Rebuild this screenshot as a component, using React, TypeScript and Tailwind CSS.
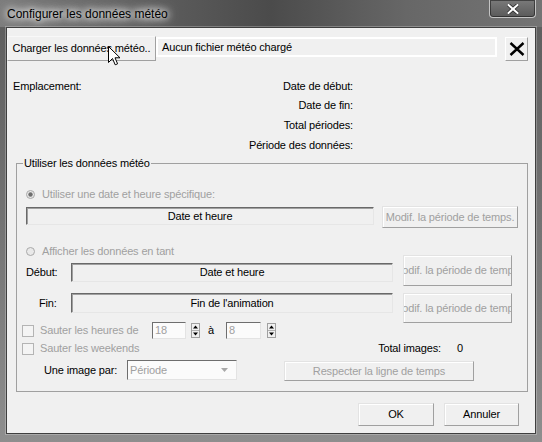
import React from "react";

const btnBase =
  "flex items-center justify-center overflow-hidden whitespace-nowrap bg-[#f0f0f0] border border-t-[#e3e3e3] border-l-[#e3e3e3] border-r-[#a0a0a0] border-b-[#a0a0a0] shadow-[inset_1px_1px_0_#ffffff]";
const sunken =
  "flex items-center justify-center whitespace-nowrap overflow-hidden bg-[#f0f0f0] border border-t-[#696969] border-l-[#696969] border-r-[#e6e6e6] border-b-[#e6e6e6] shadow-[inset_1px_1px_0_#a0a0a0]";
const sunkenWhite =
  "flex items-center whitespace-nowrap overflow-hidden bg-[#fbfbfb] border border-t-[#6e6e6e] border-l-[#6e6e6e] border-r-[#e3e3e3] border-b-[#e3e3e3]";

function Radio({ checked }: { checked?: boolean }) {
  return (
    <svg width="9" height="9" viewBox="0 0 9 9" className="shrink-0">
      <circle cx="4.5" cy="4.5" r="4" fill="#e9e9e9" stroke="#a8a8a8" strokeWidth="1" />
      {checked && <circle cx="4.5" cy="4.5" r="2.2" fill="#6e6e6e" />}
    </svg>
  );
}

function Check() {
  return <div className="w-[12px] h-[12px] shrink-0 border border-[#b4b4b4] bg-[#f4f4f4]" />;
}

function Spinner() {
  return (
    <svg width="9" height="15" viewBox="0 0 9 15" className="shrink-0">
      <rect x="0.5" y="0.5" width="8" height="14" fill="#f0f0f0" stroke="#a0a0a0" />
      <line x1="1" y1="7.5" x2="8" y2="7.5" stroke="#b0b0b0" />
      <path d="M4.5 2.5 L7 5.5 L2 5.5 Z" fill="#000" />
      <path d="M2 9.5 L7 9.5 L4.5 12.5 Z" fill="#000" />
    </svg>
  );
}

export default function App() {
  return (
    <div className="relative w-[542px] h-[442px] overflow-hidden flex flex-col font-['Liberation_Sans',Arial,sans-serif] text-[11px] tracking-[-0.15px] text-black bg-[linear-gradient(180deg,#5c5c5c_0%,#737373_50%,#8e8e8e_100%)]">
      {/* Title bar */}
      <div className="h-[27px] shrink-0 flex items-start bg-[linear-gradient(90deg,#7c7c7c_0%,#5c5c5c_30%,#4b4b4b_50%,#676767_75%,#747474_100%)]">
        <span className="ml-[7px] mt-[6px] text-[12px] tracking-normal leading-[16px] text-black [text-shadow:0_0_6px_#ffffff,0_0_10px_#ffffff,0_0_14px_#ffffff]">
          Configurer les données météo
        </span>
        <div className="ml-auto mr-[6px] w-[47px] h-[18px] flex items-center justify-center rounded-b-[4px] border border-t-0 border-[#c4c4c4] bg-[linear-gradient(180deg,#7a7a7a,#5a5a5a)] shadow-[inset_0_0_0_1px_rgba(0,0,0,0.45)]">
          <svg width="12" height="10" viewBox="0 0 12 10">
            <path d="M1.5 1 L10.5 9 M10.5 1 L1.5 9" stroke="#2a2a2a" strokeWidth="3.6" strokeLinecap="square" />
            <path d="M1.5 1 L10.5 9 M10.5 1 L1.5 9" stroke="#ffffff" strokeWidth="2" strokeLinecap="square" />
          </svg>
        </div>
      </div>

      {/* Client area */}
      <div className="ml-[6px] w-[530px] h-[407px] shrink-0 border border-[#3f3f3f] bg-[#f0f0f0] flex flex-col shadow-[0_0_0_1px_rgba(255,255,255,0.25)]">
        {/* Row 1 */}
        <div className="flex items-start mt-[8px]">
          <div className="w-[149px] h-[25px] flex items-center justify-center whitespace-nowrap bg-[#f0f0f0] border border-t-[#f8f8f8] border-l-[#f8f8f8] border-r-[#a0a0a0] border-b-[#a0a0a0]">
            Charger les données météo..
          </div>
          <div className="w-[341px] h-[20px] mt-[1px] flex items-center pl-[4px] bg-[#f0f0f0] border-2 border-white">
            Aucun fichier météo chargé
          </div>
          <div className="ml-[8px] w-[23px] h-[24px] mt-[1px] flex items-center justify-center bg-[#f0f0f0] border border-t-[#ffffff] border-l-[#ffffff] border-r-[#a0a0a0] border-b-[#a0a0a0]">
            <svg width="16" height="14" viewBox="0 0 16 14">
              <path d="M1.5 1 L14.5 13 M14.5 1 L1.5 13" stroke="#000" strokeWidth="2.4" />
            </svg>
          </div>
        </div>

        {/* Info */}
        <div className="flex mt-[15px]">
          <div className="w-[200px] pl-[6px] h-[20px] leading-[20px]">Emplacement:</div>
          <div className="w-[146px] flex flex-col items-end">
            <div className="h-[20px] leading-[20px]">Date de début:</div>
            <div className="h-[19px] leading-[19px]">Date de fin:</div>
            <div className="h-[20px] leading-[20px]">Total périodes:</div>
            <div className="h-[20px] leading-[20px]">Période des données:</div>
          </div>
        </div>

        {/* Group box */}
        <div className="relative ml-[9px] mt-[8px] w-[512px] h-[229px] border border-[#a0a0a0] flex flex-col">
          <span className="absolute left-[6px] top-[-8px] px-[1px] bg-[#f0f0f0] leading-[14px]">
            Utiliser les données météo
          </span>

          {/* Radio 1 */}
          <div className="mt-[23px] h-[14px] flex items-center">
            <div className="ml-[9px]">
              <Radio checked />
            </div>
            <span className="ml-[7px] text-[#a0a0a0]">Utiliser une date et heure spécifique:</span>
          </div>

          {/* Date et heure row */}
          <div className="mt-[5px] flex items-start">
            <div className={`ml-[9px] mt-[1px] w-[348px] h-[18px] ${sunken}`}>Date et heure</div>
            <div className={`ml-[8px] w-[136px] h-[22px] text-[#a0a0a0] ${btnBase}`}>
              Modif. la période de temps.
            </div>
          </div>

          {/* Afficher block */}
          <div className="mt-[16px] flex items-start">
            <div className="w-[376px] flex flex-col">
              <div className="h-[14px] flex items-center">
                <div className="ml-[9px]">
                  <Radio />
                </div>
                <span className="ml-[7px] text-[#a0a0a0]">Afficher les données en tant</span>
              </div>
              <div className="mt-[5px] h-[19px] flex items-center">
                <div className="w-[54px] pl-[9px]">Début:</div>
                <div className={`w-[322px] h-[19px] ${sunken}`}>Date et heure</div>
              </div>
              <div className="mt-[11px] h-[20px] flex items-center">
                <div className="w-[54px] pl-[22px]">Fin:</div>
                <div className={`w-[322px] h-[20px] ${sunken}`}>Fin de l'animation</div>
              </div>
            </div>
            <div className="ml-[10px] mt-[11px] flex flex-col">
              <div className={`w-[109px] h-[31px] text-[#a0a0a0] ${btnBase}`}>
                <span className="shrink-0">Modif. la période de temps.</span>
              </div>
              <div className={`mt-[7px] w-[109px] h-[30px] text-[#a0a0a0] ${btnBase}`}>
                <span className="shrink-0">Modif. la période de temps.</span>
              </div>
            </div>
          </div>

          {/* Sauter heures */}
          <div className="-mt-px h-[17px] flex items-center">
            <div className="ml-[5px]">
              <Check />
            </div>
            <span className="ml-[6px] w-[112px] text-[#a0a0a0] whitespace-nowrap">Sauter les heures de</span>
            <div className={`w-[34px] h-[17px] pl-[2px] text-[#a0a0a0] ${sunkenWhite}`}>18</div>
            <div className="ml-[5px] flex items-center">
              <Spinner />
            </div>
            <span className="ml-[8px] w-[18px]">à</span>
            <div className={`w-[35px] h-[17px] pl-[2px] text-[#a0a0a0] ${sunkenWhite}`}>8</div>
            <div className="ml-[6px] flex items-center">
              <Spinner />
            </div>
          </div>

          {/* Sauter weekends */}
          <div className="mt-[3px] h-[13px] flex items-center">
            <div className="w-[354px] flex items-center">
              <div className="ml-[5px]">
                <Check />
              </div>
              <span className="ml-[6px] text-[#a0a0a0] whitespace-nowrap">Sauter les weekends</span>
            </div>
            <span className="w-[70px] text-right whitespace-nowrap">Total images:</span>
            <span className="ml-[16px]">0</span>
          </div>

          {/* Une image par */}
          <div className="mt-[5px] flex items-start">
            <span className="ml-[27px] w-[83px] h-[20px] leading-[20px] whitespace-nowrap">Une image par:</span>
            <div className={`w-[110px] h-[20px] pl-[2px] text-[#a0a0a0] justify-between ${sunkenWhite}`}>
              <span>Période</span>
              <svg width="7" height="4" viewBox="0 0 7 4" className="mr-[8px]">
                <path d="M0 0 L7 0 L3.5 4 Z" fill="#a8a8a8" />
              </svg>
            </div>
            <div className={`ml-[47px] mt-[1px] w-[190px] h-[20px] text-[#a0a0a0] ${btnBase}`}>
              Respecter la ligne de temps
            </div>
          </div>
        </div>

        {/* OK / Annuler */}
        <div className="mt-[11px] flex justify-end pr-[16px] gap-[10px]">
          <div className={`w-[76px] h-[23px] ${btnBase}`}>OK</div>
          <div className={`w-[75px] h-[23px] ${btnBase}`}>Annuler</div>
        </div>
      </div>

      {/* Mouse cursor */}
      <svg
        className="absolute left-[108px] top-[46px]"
        width="13"
        height="20"
        viewBox="0 0 13 20"
      >
        <path
          d="M0.5 0.5 L0.5 16.5 L4.5 12.5 L7.2 18.8 L9.6 17.8 L7 11.8 L12 11.8 Z"
          fill="#ffffff"
          stroke="#000000"
          strokeWidth="1"
          strokeLinejoin="miter"
        />
      </svg>
    </div>
  );
}
